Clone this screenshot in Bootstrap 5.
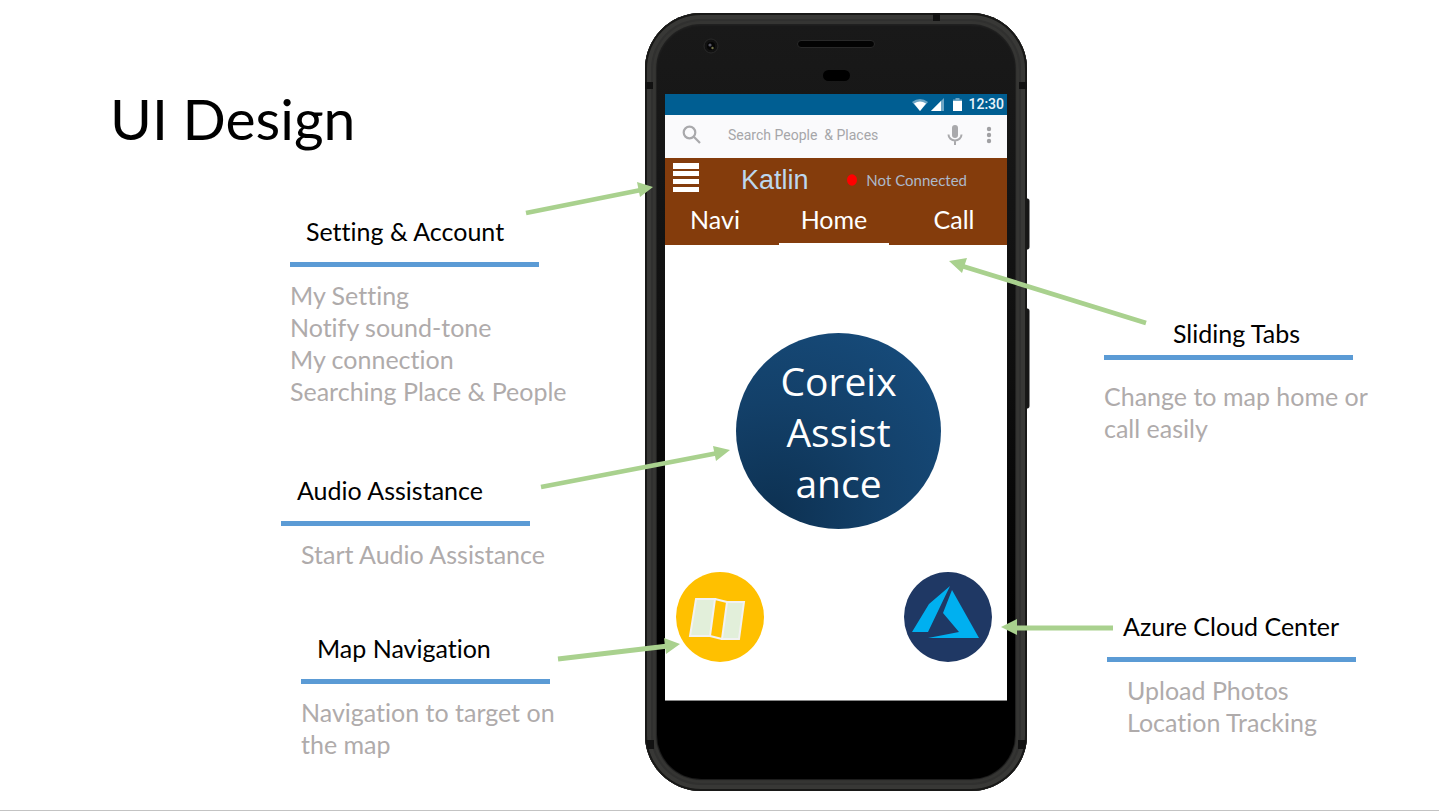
<!DOCTYPE html>
<html lang="en">
<head>
<meta charset="utf-8">
<meta name="viewport" content="width=device-width, initial-scale=1">
<title>UI Design</title>
<link href="https://cdn.jsdelivr.net/npm/bootstrap@5.3.0/dist/css/bootstrap.min.css" rel="stylesheet">
<style>
  body { font-family: Lato, "Liberation Sans", sans-serif; font-variant-ligatures: none; color: #000; background: #fff; }
  .slide { display: grid; grid-template-columns: minmax(0, 645fr) 382px minmax(0, 412fr); align-items: start;
    min-height: 100vh; border-bottom: 1px solid #c3c3c3; overflow: hidden; }
  .slide-title { font-size: 57px; line-height: 70px; margin: 83px 0 0 110px; font-weight: 400; }

  .callout { width: 249px; white-space: nowrap; font-size: 25px; line-height: 32px; }
  .callout h2 { font-size: 25px; line-height: 32px; font-weight: 400; margin: 0; padding-bottom: 15px; border-bottom: 5px solid #5b9bd5; }
  .callout ul { color: #afabab; padding-top: 12px; }
  .c-setting { margin: 62px 106px 0 auto; }
  .c-audio { margin: 67px 115px 0 auto; }
  .c-map { margin: 62px 95px 0 auto; }
  .c-tabs { margin: 317px 0 0 77px; }
  .c-cloud { margin: 166px 0 0 80px; }
  .c-tabs h2 { padding-bottom: 6px; }
  .c-tabs ul { padding-top: 20px; }

  .phone { margin-top: 13px; height: 778px; padding: 81px 20px 0; border-radius: 56px;
    background: linear-gradient(90deg, #111 0, #151515 2px, #3a3a38 4px, #2c2c2b 7px, #383836 10px, #222 12px, #222 370px, #383836 372px, #2c2c2b 375px, #3a3a38 378px, #151515 380px, #111 382px); }
  .phone::before { content: ""; position: absolute; inset: 0; border-radius: 56px;
    box-shadow: inset 0 0 0 2px #181817, inset 0 0 0 6px #383836, inset 0 0 0 8px #30302f, inset 0 0 0 11px #353533; }
  .phone::after { content: ""; position: absolute; inset: 13px 12px 12px; border-radius: 44px;
    background: linear-gradient(#191919 0, #161616 120px, #0e0e0e 350px, #000 620px); box-shadow: 0 0 2px #111; }
  .hardware, .arrows { position: absolute; left: 0; top: 0; width: 100%; height: 100%; overflow: visible; pointer-events: none; }
  .hardware { z-index: 1; }
  .arrows { z-index: 3; }
  .screen { z-index: 2; background: #fff; height: 607px; border-bottom: 1px solid #888; }
  .statusbar { height: 21px; background: #005e92; color: #e8f3fa; font: 500 14px/21px Roboto, sans-serif; padding-right: 3px; }
  .searchbar { height: 43px; background: #fafafc; padding: 0 13px 4px 17px; }
  .searchbar input { font: 400 14px/20px Roboto, sans-serif; color: #a3a3a6; padding: 0; margin-left: 26px; min-width: 0; }
  .searchbar input::placeholder { color: #a6a6a9; opacity: 1; }
  .searchbar button { line-height: 0; }
  .more { margin-left: 21px; }
  .app-head { height: 87px; background: #843c0c; color: #fff; }
  .app-row { height: 40px; }
  .app-name { font: 400 27px/32px "Liberation Sans", Arial, sans-serif; color: #bdd7ee; margin-left: 42px; }
  .state { font-size: 15px; line-height: 20px; color: #adb9ca; }
  .tab-row .nav-link { color: #fff; font-size: 25px; line-height: 32px; padding: 1px 0 8px; border-bottom: 2px solid transparent; border-radius: 0; text-align: center; }
  .tab-row .active { border-bottom-color: #fff; }
  .t-navi { width: 114px; } .t-navi .nav-link { padding-right: 14px; }
  .t-home { width: 110px; }
  .t-call { width: 118px; } .t-call .nav-link { padding-left: 12px; }
  .assist { width: 205px; height: 196px; margin: 88px 0 0 71px; border-radius: 50%; color: #fff;
    background: radial-gradient(circle at 18% 92%, #0d3152 0, #134069 45%, #164a79 85%);
    font: 400 39px/51px "Open Sans", "Noto Sans", sans-serif; }
  .round { width: 88px; height: 90px; border-radius: 50%; }
  .round-map { background: #ffc000; }
  .round-cloud { background: #1f3864; }
  .quick { margin: 43px 15px 0 11px; }
</style>
</head>
<body>
<main class="slide">
  <section>
    <h1 class="slide-title">UI Design</h1>
    <article class="callout c-setting">
      <h2 class="ps-3">Setting &amp; Account</h2>
      <ul class="list-unstyled mb-0">
        <li>My Setting</li><li>Notify sound-tone</li><li>My connection</li><li>Searching Place &amp; People</li>
      </ul>
    </article>
    <article class="callout c-audio">
      <h2 class="ps-3">Audio Assistance</h2>
      <ul class="list-unstyled mb-0 ps-3"><li class="ps-1">Start Audio Assistance</li></ul>
    </article>
    <article class="callout c-map">
      <h2 class="ps-3">Map Navigation</h2>
      <ul class="list-unstyled mb-0"><li>Navigation to target on<br>the map</li></ul>
    </article>
  </section>

  <section class="phone position-relative" aria-label="Phone">
    <svg class="hardware" viewBox="0 0 382 778" aria-hidden="true">
      <path d="M288 0h7v8h-7zM0 69h8v7H0zM374 69h8v7h-8zM1 727h8v9H3zM373 727h8l-1 9h-7z" fill="#111"/>
      <path d="M382 186h1q1 0 1 2v46q0 2-1 2h-1zM382 296h1q1 0 1 2v95q0 2-1 2h-1z" fill="#161616" stroke="#161616"/>
      <circle cx="66" cy="33" r="7" fill="#111" stroke="#292929"/>
      <circle cx="66" cy="33" r="4" fill="#050505"/>
      <circle cx="65" cy="32" r="1.6" fill="#555563"/><circle cx="67.500" cy="35" r="1.200" fill="#75754a"/>
      <rect x="152.500" y="27.500" width="77" height="7" rx="3.500" fill="#030303" stroke="#292929"/>
      <rect x="178" y="57" width="27" height="11" rx="5.500" fill="#000"/>
    </svg>

    <div class="screen position-relative">
      <div class="statusbar d-flex justify-content-end align-items-center">
        <svg width="52" height="14" viewBox="0 0 52 14" aria-hidden="true">
          <path d="M0 4Q8-2 16 4L8 13z" fill="#6ea5c4"/><path d="M2 5.500Q8 1.500 14 5.500L8 13z" fill="#fff"/>
          <path d="M19 13L32 0v13z" fill="#6ea5c4"/><path d="M19 13L29 3v10z" fill="#fff"/>
          <path d="M41 3V1.500h2.500V0h4v1.500H50V3z" fill="#6ea5c4"/><path d="M41 3h9v10h-9z" fill="#fff"/>
        </svg>
        <span class="ms-1">12:30</span>
      </div>
      <form class="searchbar d-flex align-items-center">
        <svg width="20" height="20" viewBox="0 0 20 20" fill="none" stroke="#a9a9ac" stroke-width="2.200" aria-hidden="true"><circle cx="7.500" cy="7.500" r="5.800"/><path d="M11.800 11.800L18 18"/></svg>
        <input class="border-0 bg-transparent flex-grow-1" type="text" aria-label="Search people and places" placeholder="Search People  &amp; Places">
        <button type="button" class="border-0 bg-transparent p-0" aria-label="Voice search">
          <svg width="16" height="20" viewBox="0 0 16 20"><rect x="5" y="0" width="6" height="13" rx="3" fill="#a9a9ac"/><path d="M1.500 9.500a6.500 6 0 0 0 13 0M8 15.500V20" fill="none" stroke="#a9a9ac" stroke-width="2"/></svg>
        </button>
        <button type="button" class="more border-0 bg-transparent p-0" aria-label="More">
          <svg width="10" height="18" viewBox="0 0 10 18" fill="#a0a0a3"><circle cx="5" cy="3" r="2.200"/><circle cx="5" cy="9" r="2.200"/><circle cx="5" cy="15" r="2.200"/></svg>
        </button>
      </form>
      <header class="app-head">
        <div class="app-row d-flex align-items-center ps-2">
          <button type="button" class="border-0 bg-transparent p-0 lh-1" aria-label="Menu">
            <svg class="d-block" width="26" height="30" viewBox="0 0 26 30" fill="#fff"><path d="M0 0h26v6H0zM0 8h26v5H0zM0 16h26v5H0zM0 24h26v5H0z"/></svg>
          </button>
          <span class="app-name pt-1">Katlin</span>
          <span class="state d-flex align-items-center ms-auto pt-1 me-3">
            <svg class="me-2" width="12" height="12" viewBox="0 0 12 12" aria-hidden="true"><ellipse cx="6" cy="6" rx="5" ry="5.800" fill="#f00"/></svg><span class="me-4">Not Connected</span>
          </span>
        </div>
        <ul class="nav tab-row pt-1">
          <li class="t-navi"><a class="nav-link" href="#navi">Navi</a></li>
          <li class="t-home"><a class="nav-link active" href="#home" aria-current="page">Home</a></li>
          <li class="t-call"><a class="nav-link" href="#call">Call</a></li>
        </ul>
      </header>
      <button type="button" class="assist border-0 d-block p-0">Coreix<br>Assist<br>ance</button>
      <div class="quick d-flex justify-content-between">
        <button type="button" class="round round-map border-0 p-0" aria-label="Map navigation">
          <svg class="d-block" width="88" height="90" viewBox="0 0 88 90"><g stroke="#f2f2f2" stroke-width="2" fill="#e2efda"><path d="M20 27H39L34 64H14z"/><path d="M51 30H68L63 67H46z"/><path d="M39 27L51 30M34 64L46 67" fill="none"/></g></svg>
        </button>
        <button type="button" class="round round-cloud border-0 p-0" aria-label="Azure cloud center">
          <svg class="d-block" width="88" height="90" viewBox="0 0 88 90" fill="#00b0f0"><path d="M46 14L25 32 8 60H24zM48 18L75 66H24L55 60 39 41z"/></svg>
        </button>
      </div>
    </div>

    <svg class="arrows" viewBox="0 0 382 778" aria-hidden="true">
      <g fill="none" stroke="#a9d18e" stroke-width="4.800">
        <path d="M-119 200L-4 177M-104 474L73 440M-87 646L23 633M501 310L317 253M468 615H370"/>
      </g>
      <g fill="#a9d18e">
        <path d="M8 174L-8 169-5 184zM85 437L68 433 71 448zM35 631L19 625 21 641zM304 248L322 245 317 260zM356 614L372 606V622z"/>
      </g>
    </svg>
  </section>

  <section>
    <article class="callout c-tabs">
      <h2 class="text-center ps-3">Sliding Tabs</h2>
      <ul class="list-unstyled mb-0"><li>Change to map home or<br>call easily</li></ul>
    </article>
    <article class="callout c-cloud">
      <h2 class="ps-3">Azure Cloud Center</h2>
      <ul class="list-unstyled mb-0 ps-3"><li class="ps-1">Upload Photos</li><li class="ps-1">Location Tracking</li></ul>
    </article>
  </section>
</main>
<script src="https://cdn.jsdelivr.net/npm/bootstrap@5.3.0/dist/js/bootstrap.bundle.min.js"></script>
</body>
</html>
